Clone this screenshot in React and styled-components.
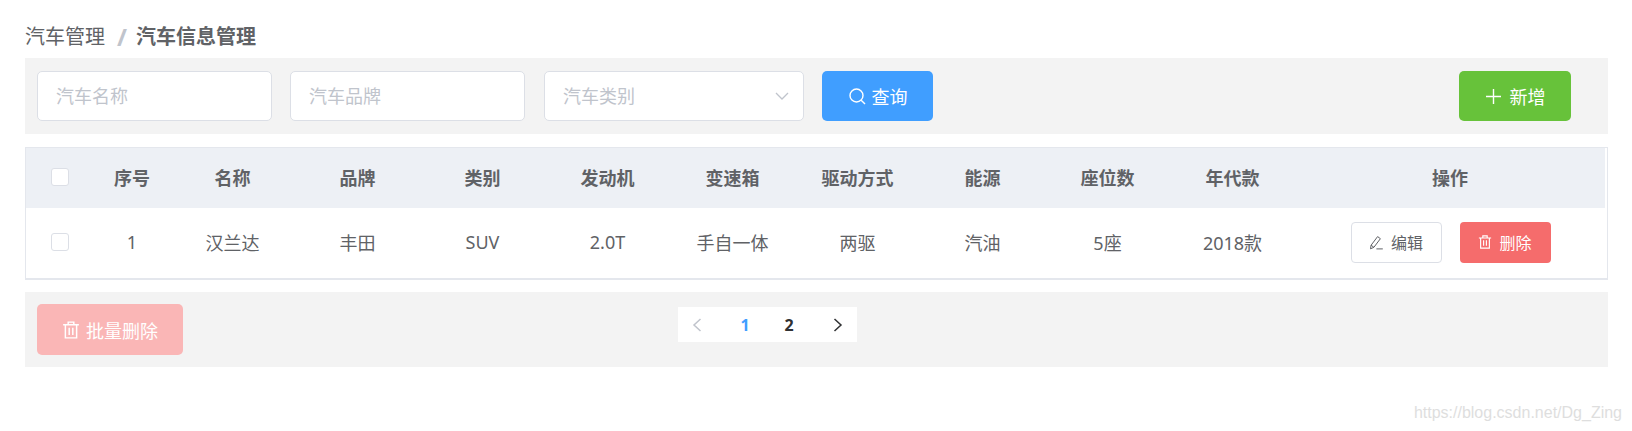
import React from 'react';
import styled, { createGlobalStyle } from 'styled-components';

const GlobalStyle = createGlobalStyle`
    body {
        margin: 0;
        background: #fff;
        font-family: "Noto Sans", "Noto Sans CJK SC", sans-serif;
    }
`

const COLUMNS = '68px 76px repeat(9, 125px) 1fr';

const headers = ['序号', '名称', '品牌', '类别', '发动机', '变速箱', '驱动方式', '能源', '座位数', '年代款', '操作'];
const row = ['1', '汉兰达', '丰田', 'SUV', '2.0T', '手自一体', '两驱', '汽油', '5座', '2018款'];

const SearchIcon = () => (
    <svg width="19" height="19" viewBox="0 0 19 19" fill="none" stroke="currentColor" strokeWidth="1.4">
        <circle cx="8.5" cy="8.5" r="6.5" />
        <path d="M13.2 13.2L17 17" />
    </svg>
);

const PlusIcon = () => (
    <svg width="17" height="17" viewBox="0 0 17 17" fill="none" stroke="currentColor" strokeWidth="1.4">
        <path d="M8.5 1v15M1 8.5h15" />
    </svg>
);

const TrashIcon = ({ size = 16 }) => (
    <svg width={size} height={size} viewBox="0 0 16 16" fill="none" stroke="currentColor" strokeWidth="1.3">
        <path d="M1 3.4h14M5.5 3.4V1h5v2.4M3 3.4V15h10V3.4M6.4 6v6.4M9.6 6v6.4" />
    </svg>
);

const EditIcon = () => (
    <svg width="15" height="15" viewBox="0 0 15 15" fill="none" stroke="currentColor" strokeWidth="1">
        <path d="M1.5 13.8l.6-3.6L8.6 1.6l2.8 2.1-6.5 8.6zM2.1 10.2l2.8 2.1M7.4 13.9h6.4" />
    </svg>
);

const Chevron = ({ dir = 'right' }) => (
    <svg width="10" height="14" viewBox="0 0 10 14" fill="none" stroke="currentColor" strokeWidth="1.5">
        <path d={dir === 'left' ? 'M8.5 1L2 7l6.5 6' : 'M1.5 1L8 7l-6.5 6'} />
    </svg>
);

export default function App() {
    return (
        <Page>
            <GlobalStyle />
            <Breadcrumb>
                <span>汽车管理</span>
                <Slash>/</Slash>
                <strong>汽车信息管理</strong>
            </Breadcrumb>
            <Toolbar>
                <Field><input placeholder="汽车名称" /></Field>
                <Field><input placeholder="汽车品牌" /></Field>
                <Field $wide>
                    <input placeholder="汽车类别" />
                    <svg width="14" height="8" viewBox="0 0 14 8" fill="none" stroke="#c0c4cc" strokeWidth="1.3">
                        <path d="M1 1l6 6 6-6" />
                    </svg>
                </Field>
                <Button $bg="#409eff" $w="111px"><SearchIcon />查询</Button>
                <AddButton $bg="#67c23a" $w="112px"><PlusIcon />新增</AddButton>
            </Toolbar>
            <Table>
                <HeadRow>
                    <Cell><Check $head /></Cell>
                    {headers.map(h => <Cell key={h}>{h}</Cell>)}
                </HeadRow>
                <BodyRow>
                    <Cell><Check /></Cell>
                    {row.map(c => <Cell key={c}>{c}</Cell>)}
                    <Actions>
                        <SmallButton $plain><EditIcon />编辑</SmallButton>
                        <SmallButton><TrashIcon size={14} />删除</SmallButton>
                    </Actions>
                </BodyRow>
            </Table>
            <Footer>
                <BatchButton $bg="#fab6b6" $w="146px" $h="51px"><TrashIcon size={18} />批量删除</BatchButton>
                <Pager>
                    <PagerArrow $off><Chevron dir="left" /></PagerArrow>
                    <PageNum $active>1</PageNum>
                    <PageNum>2</PageNum>
                    <PagerArrow><Chevron /></PagerArrow>
                </Pager>
            </Footer>
            <Watermark>https://blog.csdn.net/Dg_Zing</Watermark>
        </Page>
    )
};

const Page = styled.div`
    position: relative;
    height: 431px;
    box-sizing: border-box;
    padding: 24px 24px 0 25px;
    color: #606266;
    overflow: hidden;
`

const Breadcrumb = styled.div`
    display: flex;
    align-items: center;
    height: 25px;
    margin-bottom: 9px;
    font-size: 20px;
    line-height: 25px;
    color: #606266;
    strong {
        font-weight: 700;
    }
`

const Slash = styled.span`
    width: 16px;
    margin: 0 6px 0 9px;
    color: #c0c4cc;
    font-size: 24px;
    font-weight: 700;
    text-align: center;
`

const Toolbar = styled.div`
    display: flex;
    align-items: center;
    gap: 18px;
    height: 76px;
    padding: 0 37px 0 12px;
    background: #f3f3f3;
`

const Field = styled.label`
    display: flex;
    align-items: center;
    box-sizing: border-box;
    width: ${p => p.$wide ? '260px' : '235px'};
    height: 50px;
    margin-left: ${p => p.$wide ? '1px' : '0'};
    padding: 0 14px 0 18px;
    background: #fff;
    border: 1px solid #dcdfe6;
    border-radius: 5px;
    input {
        flex: 1;
        min-width: 0;
        padding: 0;
        border: none;
        outline: none;
        background: transparent;
        font: inherit;
        font-size: 18px;
    }
    input::placeholder {
        color: #c0c4cc;
        opacity: 1;
    }
`

const Button = styled.button`
    display: inline-flex;
    align-items: center;
    justify-content: center;
    gap: 5px;
    box-sizing: border-box;
    width: ${p => p.$w};
    height: ${p => p.$h || '50px'};
    padding: 0;
    color: #fff;
    background: ${p => p.$bg};
    border: none;
    border-radius: 5px;
    font: inherit;
    font-size: 18px;
`

const AddButton = styled(Button)`
    margin-left: auto;
    gap: 8px;
`

const BatchButton = styled(Button)`
    gap: 6px;
`

const Table = styled.div`
    box-sizing: border-box;
    height: 133px;
    margin-top: 13px;
    padding-right: 2px;
    border: 1px solid #e4e7ed;
    border-bottom-width: 2px;
`

const HeadRow = styled.div`
    display: grid;
    grid-template-columns: ${COLUMNS};
    height: 60px;
    background: #edf0f5;
    font-size: 18px;
    font-weight: 700;
`

const BodyRow = styled.div`
    display: grid;
    grid-template-columns: ${COLUMNS};
    height: 70px;
    font-size: 18px;
`

const Cell = styled.div`
    display: flex;
    align-items: center;
    justify-content: center;
    padding-bottom: 2px;
`

const Check = styled.span`
    box-sizing: border-box;
    width: 18px;
    height: 18px;
    background: #fff;
    border: 1px solid #dcdfe6;
    border-radius: 3px;
`

const Actions = styled(Cell)`
    gap: 18px;
    padding-left: 1px;
`

const SmallButton = styled.button`
    display: inline-flex;
    align-items: center;
    justify-content: center;
    gap: 7px;
    box-sizing: border-box;
    width: 91px;
    height: 41px;
    padding: 0;
    color: ${p => p.$plain ? '#606266' : '#fff'};
    background: ${p => p.$plain ? '#fff' : '#f56c6c'};
    border: ${p => p.$plain ? '1px solid #dcdfe6' : 'none'};
    border-radius: 4px;
    font: inherit;
    font-size: 16px;
`

const Footer = styled.div`
    display: flex;
    align-items: flex-start;
    gap: 495px;
    height: 75px;
    box-sizing: border-box;
    margin-top: 12px;
    padding: 12px 0 0 12px;
    background: #f3f3f3;
`

const Pager = styled.div`
    display: flex;
    align-items: center;
    width: 179px;
    height: 35px;
    margin-top: 3px;
    background: #fff;
    font-weight: 700;
    font-size: 16px;
`

const PagerArrow = styled.span`
    display: flex;
    align-items: center;
    justify-content: center;
    width: 38px;
    height: 100%;
    color: ${p => p.$off ? '#c0c4cc' : '#303133'};
    & + span {
        margin-left: 7px;
    }
    &:last-child {
        margin-left: auto;
    }
`

const PageNum = styled.span`
    width: 44px;
    text-align: center;
    color: ${p => p.$active ? '#409eff' : '#303133'};
`

const Watermark = styled.div`
    position: absolute;
    right: 10px;
    bottom: 9px;
    font-family: "Liberation Sans", sans-serif;
    font-size: 16px;
    color: #dedede;
`
